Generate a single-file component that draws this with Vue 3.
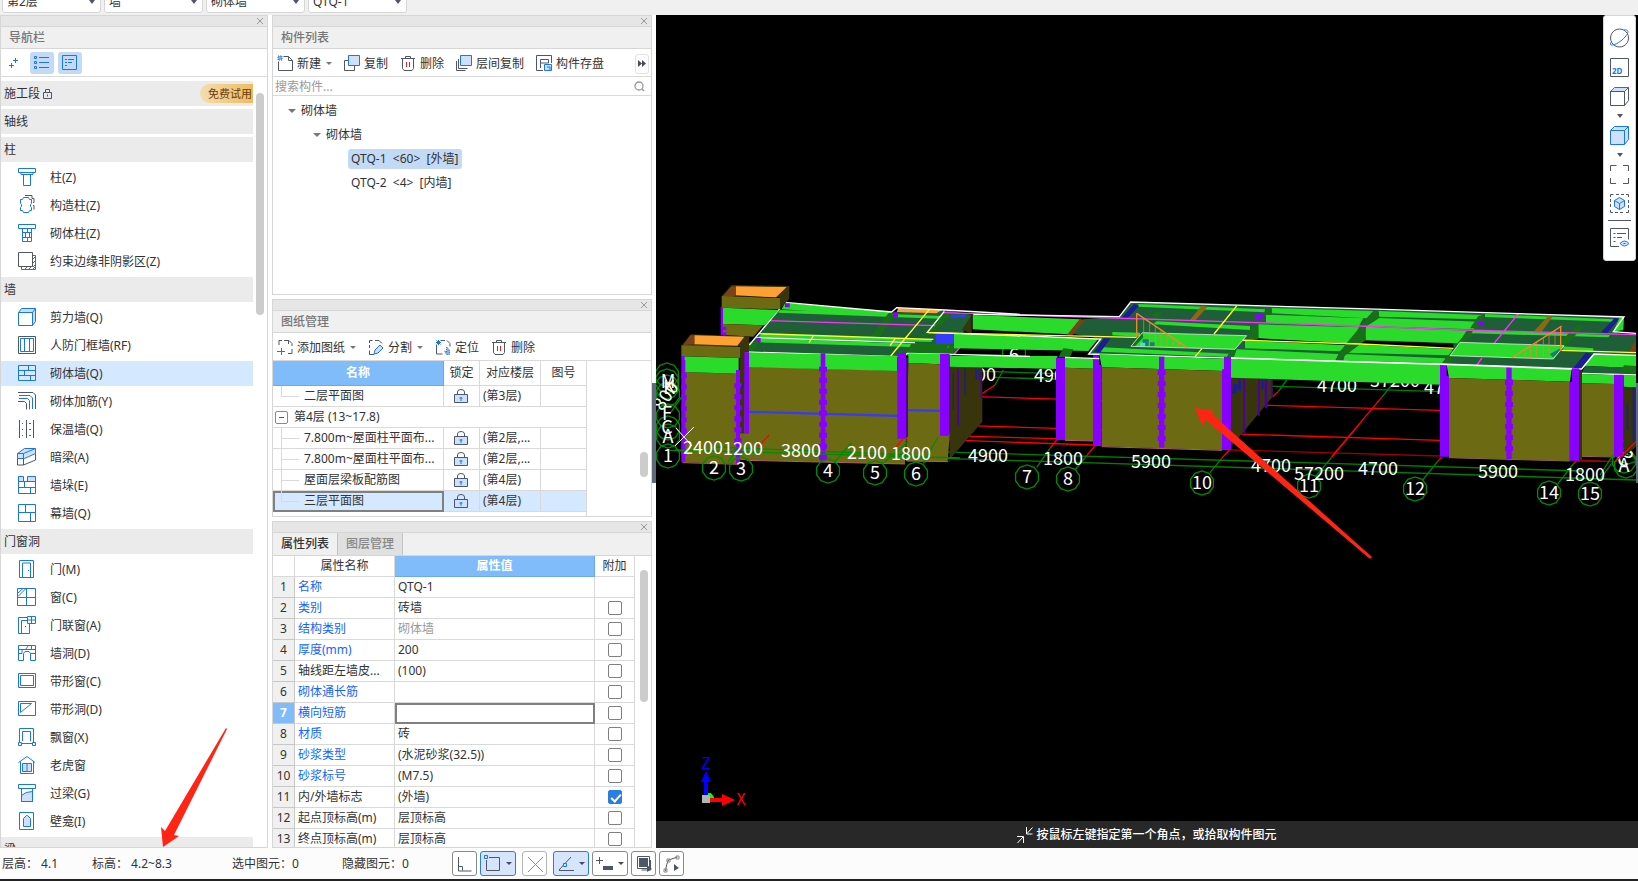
<script setup>
import { ref } from 'vue'

// each icon is a list of [path, kind]: b = blue line, g = grey line, f = blue line with light fill
const navGroups = [
    { name: '施工段', locked: true, badge: '免费试用', items: [] },
    { name: '轴线', items: [] },
    {
        name: '柱',
        items: [
            { name: '柱(Z)', icon: [['M1.5 1.5h17v4h-17zM4 5.5v2h12v-2M6.5 7.5v11h7v-11', 'b']] },
            {
                name: '构造柱(Z)',
                icon: [
                    ['M8 .5h7v3h2v4h-1M16 10.5h1v4', 'g'],
                    ['M6.5 2.5h5l1 2h2v4l-1 1v2l1 1v3h-2l-1 2h-5l-1-2h-2v-3l1-1v-2l-1-1v-4h2z', 'b'],
                ],
            },
            {
                name: '砌体柱(Z)',
                icon: [['M1.5 1.5h17v4h-17zM5.5 5.5v13h9v-13M5.5 9.5h9M5.5 14.5h9M10.5 5.5v4M8.5 9.5v5M12.5 9.5v5M10.5 14.5v4', 'b']],
            },
            {
                name: '约束边缘非阴影区(Z)',
                icon: [
                    ['M1.5 1.5h14v14h-14z', 'g'],
                    ['M16 4.5h2.5v14h-14V16M16 8l2-2M16 12l2-2M16 16l2-2M8 18l2-2M12 18l2-2M16 18l2-2', 'b'],
                ],
            },
        ],
    },
    {
        name: '墙',
        items: [
            { name: '剪力墙(Q)', icon: [['M1.5 5.5l3-4h14v13l-3 4v-13z', 'f'], ['M1.5 5.5h14v13h-14zM15.5 5.5l3-4', 'w']] },
            { name: '人防门框墙(RF)', icon: [['M1.5 1.5h17v17h-17z', 'g'], ['M3.5 3.5h13v13h-13zM7.5 3.5v13M12.5 3.5v13', 'b']] },
            { name: '砌体墙(Q)', active: true, icon: [['M1.5 2.5h17v15h-17zM1.5 7.5h17M1.5 12.5h17M11.5 2.5v5M7.5 7.5v5M13.5 12.5v5', 'b']] },
            {
                name: '砌体加筋(Y)',
                icon: [
                    ['M1 1.5h15l2.500 2.500v14M1 10.500h6.500l2 2v6', 'g'],
                    ['M2 4.500h11l2.500 2.500v11M2 7.500h8.500l2 2v9', 'b'],
                ],
            },
            { name: '保温墙(Q)', icon: [['M2.500 1v18M9.500 1v18M16.500 1v18', 'g'], ['M5 4.500h1M12 4.500h2M5 10.500h1M12 10.500h2M5 16.500h1M12 16.500h2', 'b']] },
            { name: '暗梁(A)', icon: [['M.5 6.500l7-5h11v5l-11 5h-7z', 'f'], ['M.5 11.500v6.500h6v-6.500', 'g'], ['M6.500 18l12-5V6.500', 'g'], ['M.5 6.500h6v5M6.500 6.500l12-5', 'b']] },
            { name: '墙垛(E)', icon: [['M1.5 1.5h5v5h-5zM10.500 1.5h8v5h-8z', 'f'], ['M1.5 1.5v17h17v-17M1.5 6.500h17M1.5 12.500h17M7.500 6.500v6M13.500 12.500v6', 'b']] },
            { name: '幕墙(Q)', icon: [['M1.5 1.5h17v17h-17zM1.5 9.500h17M8.500 1.5v8M13.500 9.500v9', 'b']] },
        ],
    },
    {
        name: '门窗洞',
        items: [
            { name: '门(M)', icon: [['M2.500 18.500v-17h14v17zM5.500 18v-14h8v14M11.500 11v1', 'b']] },
            { name: '窗(C)', icon: [['M.5 1.5h18v17h-18zM.5 10.500h18M9.500 1.5v17M1 6l5-4.500M1 9.500l8-8', 'b']] },
            { name: '门联窗(A)', icon: [['M1.5 18.500v-16h9M12.500 9v9.500h-11M4.500 18V5.500h6M10.500 1.5h8v7h-8zM14.500 1.5v7M10.500 5h8M8.500 11v1', 'b']] },
            { name: '墙洞(D)', icon: [['M1.5 2.500h17v15h-5v-7l-1.500-2h-4l-1.500 2v7h-5zM1.5 6.500h17M8.500 6.500l3-4M5 6.500v4H1.500M13.500 10.500h5M14.500 2.500v4', 'b']] },
            { name: '带形窗(C)', icon: [['M1.5 2.500h17v14h-17zM3.500 4.500h13v10h-13z', 'b']] },
            { name: '带形洞(D)', icon: [['M1.5 2.500h17v14h-17zM3.500 13.500v-9h11z', 'b']] },
            { name: '飘窗(X)', icon: [['M2.500 15V1.5h14V15M5.500 14V4.500h8V14M1.5 15.500h3v3h-3zM15.500 15.500h3v3h-3zM4.500 16.500h11', 'b']] },
            { name: '老虎窗', icon: [['M5.500 8.500h9v8h-9z', 'f'], ['M1.5 7.500l8.500-6 8 6M3.500 6.500v12h13v-12M10 8.500v8', 'b']] },
            { name: '过梁(G)', icon: [['M4.500 18.500v-6q4-4 11-4v10z', 'f'], ['M1.5 1.5h17v4h-17zM4.500 5.500v13h11v-13', 'b']] },
            { name: '壁龛(I)', icon: [['M6.500 15.500v-8l3-3h1l3 3v8z', 'f'], ['M2.500 1.5h14v17h-14z', 'b']] },
        ],
    },
    { name: '梁', items: [] },
]

const selects = ['第2层', '墙', '砌体墙', 'QTQ-1']
const keyword = ref('')

const componentTools = [
    { name: '新建', arrow: true, icon: [['M1 1h4v4H1z', 'd'], ['M6.500 1.5h5l4 4v10h-14v-9M11.500 1.5v4h4', 'g']] },
    { name: '复制', icon: [['M.5 5.500h10v10h-10z', 'g'], ['M4.500 .5h11v10h-11z', 'f']] },
    { name: '删除', icon: [['M1 3.500h14M5.500 3V1.5h5V3M2.500 3.500v10l1.500 2h8l1.500-2v-10', 'g'], ['M6.500 7v5M9.500 7v5', 'r']] },
    { name: '层间复制', icon: [['M.5 6v9.500h9M2.500 4v9.500h9', 'g'], ['M4.500 .5h11v10h-11z', 'f']] },
    { name: '构件存盘', icon: [['M7 15.500H.5v-15h15V8M4.500 13V4.500h8V8h-8', 'g'], ['M8.500 9.500h7v6h-7zM11 12h3v3', 'f']] },
]
const drawingTools = [
    { name: '添加图纸', arrow: true, icon: [['M2 6V1.5h3M7 1.5h5l3 3V7M15 10v4.500h-4M11.500 1.5V5', 'g'], ['M0 12.500h8M4.500 9v7', 'b']] },
    { name: '分割', arrow: true, icon: [['M6 15.500H1.500v-4M1.500 9V6M1.500 4V1.5h3M7 1.5h4l3 3', 'g'], ['M7 11l5-5 3 3-5 5-4 1z', 'f']] },
    { name: '定位', icon: [['M6 1.5h4M12 1.5l3 3v3M1.500 6v9h6', 'g'], ['M3.500 1v5M1 3.500h5M1.500 1.5l4 4M5.500 1.5l-4 4', 'b'], ['M11.500 8v5l-2-1 2 3.500h3V11z', 'd']] },
    { name: '删除', icon: componentTools[2].icon },
]

const drawings = [
    { name: '二层平面图', floor: '(第3层)', last: true },
    { name: '第4层 (13~17.8)', group: true },
    { name: '7.800m~屋面柱平面布...', floor: '(第2层,...' },
    { name: '7.800m~屋面柱平面布...', floor: '(第2层,...' },
    { name: '屋面层梁板配筋图', floor: '(第4层)' },
    { name: '三层平面图', floor: '(第4层)', last: true, selected: true },
    { name: '', group: true },
]

const properties = ref([
    { name: '名称', value: 'QTQ-1', blue: true, noCheck: true },
    { name: '类别', value: '砖墙', blue: true },
    { name: '结构类别', value: '砌体墙', blue: true, muted: true },
    { name: '厚度(mm)', value: '200', blue: true },
    { name: '轴线距左墙皮...', value: '(100)' },
    { name: '砌体通长筋', value: '', blue: true },
    { name: '横向短筋', value: '', blue: true, current: true },
    { name: '材质', value: '砖', blue: true },
    { name: '砂浆类型', value: '(水泥砂浆(32.5))', blue: true },
    { name: '砂浆标号', value: '(M7.5)', blue: true },
    { name: '内/外墙标志', value: '(外墙)', checked: true },
    { name: '起点顶标高(m)', value: '层顶标高' },
    { name: '终点顶标高(m)', value: '层顶标高' },
])

const statusTools = [
    { name: '正交', icon: [['M2.500 3v14h13M2.500 12.500h4v4', 'g']] },
    { name: '矩形捕捉', on: true, arrow: true, icon: [['M5 3.500h10.500v13H2.500V6', 'g'], ['M.5 1.500h3v3h-3z', 'f']] },
    { name: '交点', dim: true, icon: [['M2 3l15 15M17 3L2 18', 'h']] },
    { name: '角度', on: true, arrow: true, icon: [['M2 16L14 3M2 16.500h15', 'g'], ['M6.500 9.500h3v3h-3z', 'f']] },
    { name: '动态输入', arrow: true, icon: [['M0 6.500h7M3.500 3v7', 'g'], ['M7 12h10v4H7z', 'k']] },
    { name: '选择', icon: [['M4 4h9v9H4z', 'k'], ['M2.500 2.500h12v12h-12zM15.500 6v10h-9', 'g'], ['M12 11v7l5-3z', 'k']] },
    { name: '折线', icon: [['M2.500 17q1-8 3-11l9-3', 'g'], ['M1 15h3v3H1zM4 5h3v3H4zM13 2h3v3h-3z', 'h'], ['M11 10v7l5-3z', 'k']] },
]

const viewTools = [
    { name: '动态观察', icon: [['M10.500 1a9 9 0 1 0 .1 0', 'g'], ['M3 13C-2 19 6 18 13 12S21 1 15 2', 'b']] },
    { name: '二维', text: '2D', icon: [['M1.500 1.500h18v18h-18z', 'g']] },
    { name: '视图', arrow: true, icon: [['M1.500 5.500l4-4h14l-4 4z', 'f'], ['M1.500 5.500h14v14h-14zM19.500 1.500v13l-4 5', 'g']] },
    { name: '显示', arrow: true, icon: [['M1.500 5.500l4-4h14v13l-4 5h-14z', 'f'], ['M1.500 5.500h14v14M15.500 5.500l4-4', 'b']] },
    { name: '全屏', icon: [['M1.500 7V1.500h6M14 1.500h5.500V7M19.500 14v5.500H14M7 19.500H1.500V14', 'g']] },
    { name: '局部三维', divider: true, icon: [['M1.500 4V1.500h3M7 1.500h3M12 1.500h3M17 1.500h2.500V4M19.500 7v3M19.500 12v3M19.500 17v2.500H17M14 19.500h-3M9 19.500H6M4 19.500H1.500V17M1.500 14v-3M1.500 9V6', 'g'], ['M10.500 4.500l5 3v6l-5 3-5-3v-6z', 'f'], ['M5.500 7.500l5 3 5-3M10.500 10.500v6', 'b']] },
    { name: '显示设置', icon: [['M10 19.500H1.500v-18h18v11M4.500 6.500h2M8 6.500h9M4.500 10.500h2M8 10.500h5M4.500 14.500h2', 'g'], ['M11 16.500q4.500-5 9 0q-4.500 5-9 0zM14.500 16.500h2', 'f']] },
]

// axis bubbles and dimensions of the grid
const bubbles = [
    [668, 456, '1'], [714, 468, '2'], [741, 469, '3'], [828, 471, '4'], [875, 473, '5'], [916, 474, '6'],
    [1027, 477, '7'], [1068, 479, '8'], [1202, 483, '10'], [1309, 486, '11'], [1415, 489, '12'], [1549, 493, '14'], [1590, 494, '15'],
]
const sideBubbles = [
    [667, 375], [667, 381], [667, 387], [668, 394], [668, 416], [668, 428], [668, 436],
    [1624, 461], [1626, 466], [1628, 452],
]
const dims = [
    [703, 448, '2400'], [743, 449, '1200'], [801, 451, '3800'], [867, 453, '2100'], [911, 454, '1800'], [988, 456, '4900'],
    [1063, 459, '1800'], [1151, 462, '5900'], [1271, 466, '4700'], [1319, 474, '57200'], [1378, 469, '4700'], [1498, 472, '5900'], [1585, 475, '1800'],
]
const hiddenDims = [[976, 375, '1800'], [1054, 376, '4900'], [1337, 386, '4700'], [1395, 381, '57200'], [1444, 388, '4700']]

const bubblePoints = (x, y) => {
    const points = []
    for (let i = 0; i < 10; i++) {
        const angle = (i * Math.PI) / 5 + Math.PI / 10
        points.push(`${(x + 12 * Math.cos(angle)).toFixed(1)},${(y + 12 * Math.sin(angle)).toFixed(1)}`)
    }
    return points.join(' ')
}

// toothed column: the masonry teeth stick out on both sides
const toothed = (x, top, bottom, narrow, wide) => {
    let path = `M${x - narrow} ${top}H${x + narrow}V${bottom}H${x - narrow}z`
    for (let y = top + 40; y < bottom - 12; y += 33) {
        path += `M${x - wide} ${y}H${x + wide}v15H${x - wide}z`
    }
    return path
}
</script>

<template>
    <div class="app">
        <header class="topbar">
            <div v-for="s in selects" :key="s" class="select-box">
                <select :aria-label="s">
                    <option>{{ s }}</option>
                </select>
            </div>
        </header>

        <main class="main">
            <!-- navigation -->
            <aside class="panel nav">
                <div class="strip">
                    <button class="close" aria-label="关闭"><svg width="8" height="8"><path d="M1 1l6 6M7 1L1 7" /></svg></button>
                </div>
                <h2 class="panel-title">导航栏</h2>
                <div class="toolbar nav-toolbar">
                    <button class="mini" aria-label="添加">
                        <svg width="22" height="22"><path class="b" d="M4 13.500h5M6.500 11v5M8 8.500h5M10.500 6v5" /></svg>
                    </button>
                    <button class="mini on" aria-label="列表">
                        <svg width="24" height="22">
                            <path class="b" d="M4.500 4.500h2v2h-2zM4.500 9.500h2v2h-2zM4.500 14.500h2v2h-2zM9 5.500h10M9 10.500h10M9 15.500h10" />
                        </svg>
                    </button>
                    <button class="mini on" aria-label="分组">
                        <svg width="24" height="22">
                            <path class="b" d="M4.500 3.500h14v14h-14zM7 7.500h2M10 7.500h6M7 10.500h2M10 10.500h4M7 13.500h2" />
                        </svg>
                    </button>
                </div>
                <div class="nav-body">
                    <div class="nav-list">
                        <template v-for="group in navGroups" :key="group.name">
                            <div class="nav-head">
                                <span>{{ group.name }}</span>
                                <svg v-if="group.locked" class="small-lock" width="11" height="12">
                                    <path class="g" d="M1.500 4.500h8v6h-8zM3.500 4V1.500h4V4M5.500 6.500v2" />
                                </svg>
                                <span v-if="group.badge" class="badge">{{ group.badge }}</span>
                            </div>
                            <div v-for="item in group.items" :key="item.name" class="nav-item" :class="{ active: item.active }">
                                <svg width="21" height="21">
                                    <path v-for="(p, i) in item.icon" :key="i" :d="p[0]" :class="p[1]" />
                                </svg>
                                <span>{{ item.name }}</span>
                            </div>
                        </template>
                    </div>
                    <div class="thumb nav-thumb"></div>
                </div>
                <svg class="nav-arrow" width="66" height="120" viewBox="161 729 66 120">
                    <path d="M163 849L161 829L165 833L226 730L227 731L174 837L179 838z" />
                </svg>
            </aside>

            <div class="middle">
                <!-- component list -->
                <section class="panel components">
                    <div class="strip">
                        <button class="close" aria-label="关闭"><svg width="8" height="8"><path d="M1 1l6 6M7 1L1 7" /></svg></button>
                    </div>
                    <h2 class="panel-title">构件列表</h2>
                    <div class="toolbar">
                        <button v-for="tool in componentTools" :key="tool.name" class="tool">
                            <svg width="16" height="17">
                                <path v-for="(p, i) in tool.icon" :key="i" :d="p[0]" :class="p[1]" />
                            </svg>
                            <span>{{ tool.name }}</span>
                            <i v-if="tool.arrow" class="caret"></i>
                        </button>
                        <button class="more" aria-label="更多">
                            <svg width="8" height="7"><path d="M0 0l4 3.500-4 3.500zM4 0l4 3.500-4 3.500z" fill="#444b59" /></svg>
                        </button>
                    </div>
                    <div class="search">
                        <input v-model="keyword" type="text" placeholder="搜索构件..." aria-label="搜索构件" />
                        <svg width="12" height="12">
                            <circle cx="6" cy="5" r="4" fill="none" stroke="#999" stroke-width="1.300" />
                            <path d="M9 8l2 2" stroke="#999" stroke-width="1.500" />
                        </svg>
                    </div>
                    <ul class="tree">
                        <li class="level1"><i class="caret big"></i>砌体墙</li>
                        <li class="level2"><i class="caret big"></i>砌体墙</li>
                        <li class="level3"><span class="picked">QTQ-1&nbsp; &lt;60&gt;&nbsp; [外墙]</span></li>
                        <li class="level3"><span>QTQ-2&nbsp; &lt;4&gt;&nbsp; [内墙]</span></li>
                    </ul>
                </section>

                <!-- drawings -->
                <section class="panel drawings">
                    <div class="strip">
                        <button class="close" aria-label="关闭"><svg width="8" height="8"><path d="M1 1l6 6M7 1L1 7" /></svg></button>
                    </div>
                    <h2 class="panel-title">图纸管理</h2>
                    <div class="toolbar">
                        <button v-for="tool in drawingTools" :key="tool.name" class="tool">
                            <svg width="16" height="17">
                                <path v-for="(p, i) in tool.icon" :key="i" :d="p[0]" :class="p[1]" />
                            </svg>
                            <span>{{ tool.name }}</span>
                            <i v-if="tool.arrow" class="caret"></i>
                        </button>
                    </div>
                    <div class="table-area">
                        <table class="drawing-table">
                            <colgroup>
                                <col class="c-name" />
                                <col class="c-lock" />
                                <col class="c-floor" />
                                <col class="c-no" />
                            </colgroup>
                            <thead>
                                <tr>
                                    <th class="hot">名称</th>
                                    <th>锁定</th>
                                    <th>对应楼层</th>
                                    <th>图号</th>
                                </tr>
                            </thead>
                            <tbody>
                                <tr v-for="(row, i) in drawings" :key="i" :class="{ selected: row.selected }">
                                    <td v-if="row.group" colspan="4" class="group-cell">
                                        <div><i class="minus"></i>{{ row.name }}</div>
                                    </td>
                                    <template v-else>
                                        <td class="leaf" :class="{ last: row.last, focus: row.selected }">{{ row.name }}</td>
                                        <td class="lock-cell">
                                            <svg width="14" height="16">
                                                <path class="lock" d="M.5 6.500h13v8H.5z" />
                                                <path class="g" d="M3.500 6V4q0-2.500 3.500-2.500T10.500 4v2" />
                                                <path class="b" d="M5.500 10h3M7 9v4" />
                                            </svg>
                                        </td>
                                        <td>{{ row.floor }}</td>
                                        <td></td>
                                    </template>
                                </tr>
                            </tbody>
                        </table>
                        <div class="thumb drawing-thumb"></div>
                    </div>
                </section>

                <!-- properties -->
                <section class="panel properties">
                    <div class="strip">
                        <button class="close" aria-label="关闭"><svg width="8" height="8"><path d="M1 1l6 6M7 1L1 7" /></svg></button>
                    </div>
                    <div class="tabs">
                        <button class="tab current">属性列表</button>
                        <button class="tab">图层管理</button>
                    </div>
                    <div class="table-area">
                        <table class="prop-table">
                            <colgroup>
                                <col class="p-num" />
                                <col class="p-name" />
                                <col class="p-value" />
                                <col class="p-extra" />
                            </colgroup>
                            <thead>
                                <tr>
                                    <th></th>
                                    <th>属性名称</th>
                                    <th class="hot">属性值</th>
                                    <th>附加</th>
                                </tr>
                            </thead>
                            <tbody>
                                <tr v-for="(row, i) in properties" :key="row.name">
                                    <td class="num" :class="{ hot: row.current }">{{ i + 1 }}</td>
                                    <td :class="{ blue: row.blue }">{{ row.name }}</td>
                                    <td :class="{ muted: row.muted, focus: row.current }">{{ row.value }}</td>
                                    <td class="check">
                                        <input v-if="!row.noCheck" v-model="row.checked" type="checkbox" :aria-label="row.name" />
                                    </td>
                                </tr>
                            </tbody>
                        </table>
                        <div class="thumb prop-thumb"></div>
                    </div>
                </section>
            </div>

            <!-- 3D view -->
            <section class="viewport">
                <div class="canvas">
                    <svg class="scene" viewBox="656 15 982 807" preserveAspectRatio="xMinYMin slice">
                        <!-- axis grid -->
                        <g transform="translate(650 270) scale(0.33333)">
                            <path class="axis-red" d="M980 380L2370 421M925 466L2370 511M890 497L1218 506M765 505L1330 525M2785 572L2890 575" />
                            <path class="axis-dark" d="M1740 540L2370 558M2780 572L2900 575" />
                            <path class="axis-green" d="M980 303L1218 311M1035 322L2370 365M350 530L2800 603M60 541L1110 572L2040 601L2958 630" />
                            <path class="axis-red" d="M760 508L740 530M893 497L868 527M1035 345L995 372M1220 510L1200 535M1335 528L1310 557M1738 540L1715 565M2130 460L2045 562M2195 382L2045 560M1885 365L1868 380M2375 562L2365 572M2780 572L2770 582" />
                            <path class="axis-green" d="M740 530L695 580M868 527L820 580M1060 300L1035 345M1200 535L1160 592M1310 557L1275 600M1715 565L1680 608M2045 562L1998 618M2225 345L2195 382M1910 330L1885 365M2365 572L2318 630M2770 582L2722 643M2885 580L2845 635M110 360L60 430" />
                        </g>
                        <polygon v-for="(b, i) in sideBubbles" :key="'s' + i" :points="bubblePoints(b[0], b[1])" class="bubble" />
                        <polygon :points="bubblePoints(1014, 354)" class="bubble" />
                        <text x="1014" y="361" class="label">6</text>
                        <text v-for="(d, i) in hiddenDims" :key="'h' + i" :x="d[0]" :y="d[1] + 6" class="label">{{ d[2] }}</text>
                        <g class="side-text">
                            <text x="668" y="388" class="label">M</text>
                            <text x="669" y="394" class="label">K</text>
                            <text x="666" y="402" class="label" transform="rotate(-55 666 396)">800</text>
                            <text x="667" y="420" class="label">F</text>
                            <text x="667" y="434" class="label">C</text>
                            <text x="668" y="443" class="label">A</text>
                            <text x="1628" y="458" class="label">S</text>
                            <text x="1623" y="466" class="label">C</text>
                            <text x="1624" y="472" class="label">A</text>
                        </g>

                        <!-- west wing -->
                        <g transform="translate(650 270) scale(0.33333)">
                            <path class="teal" d="M385 118L720 128L885 120L965 135L905 260L285 246z" />
                            <path class="green" d="M405 98L725 126L705 138L395 118zM390 120L880 138L870 146L385 128zM335 192L845 208V216L325 202zM325 205L895 225L900 235L330 217z" />
                            <path class="mid" d="M715 130L735 135L690 200H662zM880 130L905 136L840 195L810 200zM300 215L325 218L310 246H285zM785 218L900 222L880 250H770zM900 225L932 232L910 255L880 250z" />
                            <path class="orange" d="M745 114L875 120L860 130L740 126z" />
                            <path class="olive-dark" d="M935 180L965 136V190zM899 280L925 285L997 260V455L893 575H899z" />
                            <path class="magenta" d="M355 152L855 167M882 128L1110 136M935 227L913 252" />
                            <path class="yellow" d="M325 191L850 208M838 118L722 258M490 198L477 218M720 228L735 206" />
                            <path class="green" d="M968 135L1290 148L1255 193L968 178zM912 190L1345 206L1315 243L912 235zM899 258H1222V297L899 290z" />
                            <path class="blue" d="M905 134H955L940 143H900zM857 188H911V222H857z" />
                            <path class="white" d="M405 97L725 126L740 113L885 120L1110 133M390 115L298 225M320 203L795 218M285 246L760 260L772 250L1140 259M883 124L832 187L1110 198" />
                            <path class="purple" d="M405 100h14v12h-14zM730 127h14v14h-14zM320 204h12v12h-12z" />

                            <path class="olive-dark" d="M245 45L418 48V86L390 118V82L215 78z" />
                            <path class="orange" d="M257 49L410 51L378 82L257 76z" />
                            <path class="brown" d="M257 49V76L250 80H218L243 50z" />
                            <path class="olive" d="M215 78L390 84V118L215 113z" />
                            <path class="green" d="M218 113L387 120L345 166L218 162z" />
                            <path class="olive" d="M218 162L340 166L310 200L218 195z" />
                            <path class="purple" d="M212 112h7v83h-7zM219 170h10v10h-10zM219 187h10v10h-10z" />

                            <path class="olive-dark" d="M122 193L297 199V247L270 265V228H94z" />
                            <path class="orange" d="M133 196L283 200L262 227L133 223z" />
                            <path class="brown" d="M133 196V223L100 225L121 196z" />
                            <path class="olive" d="M94 226L270 230V264L94 258zM98 306L266 311L270 582L98 577z" />
                            <path class="green" d="M98 259L266 264V311L98 306z" />
                            <path class="olive-dark" d="M270 264L285 250V490H270z" />
                            <path class="olive" d="M270 490H283L285 290L745 302L768 505L765 582L270 570z" />
                            <path class="green" d="M285 247L742 258V303L285 291zM775 250L870 252V283L775 279z" />
                            <path class="olive" d="M775 279L870 283L899 497L893 575L768 573z" />
                            <path class="blue" d="M297 422L745 434V441L297 429zM775 417L870 419V426L775 424z" />
                            <path class="purple" d="M94 258h10V577H94zM283 247h14V491H283zM742 250h26V506H742zM870 252h29V497H870z" />
                            <path class="purple" :d="toothed(264, 300, 582, 6, 11)" />
                            <path class="purple" :d="toothed(102, 270, 577, 4, 8)" />
                            <path class="purple" :d="toothed(519, 250, 574, 7, 12)" />
                            <path class="purple-dark" d="M768 262h6V500h-6zM922 296h5V466h-5zM991 296h5V383h-5z" />
                            <path class="navy" d="M943 296h5v79h-5zM977 296h4v34h-4zM986 296h4v34h-4zM908 310h4v110h-4zM272 350l10-8v6l-10 8z" />
                            <path class="pink" d="M98 578L266 583M290 571L765 582M770 573L893 575" />
                        </g>

                        <!-- middle and east roof -->
                        <g transform="translate(1020 280) scale(0.33333)">
                            <path class="teal" d="M332 66L1020 86L1812 111L1790 160L1848 165V225L1680 265L205 222L240 176L150 160L190 118L298 110z" />
                            <path class="black" d="M700 172L1300 190V212L990 200L700 180z" />
                            <path class="green" d="M355 72L735 88V97L355 80zM755 84L1060 93L1040 115L755 100zM738 104L1030 115L1015 141L738 128zM715 133L1018 142L985 190L715 175zM675 183L978 195L960 214L675 205zM650 208L955 222L945 245L640 232z" />
                            <path class="green" d="M410 124L690 138V150L400 133zM277 156L360 158V170L277 166zM250 202L640 222V232L240 215z" />
                            <path class="green" d="M1075 93L1385 105L1375 118L1075 110zM1055 113L1380 125L1360 148L1040 138zM1038 140L1340 152L1315 190L1035 180zM990 193L1300 208L1285 226L980 218zM975 222L1275 235V250L970 242z" />
                            <path class="mid" d="M1060 92L1077 95V115L1035 142L1038 180L950 245L945 242L975 195L1020 142zM690 145L715 133V178L685 182zM735 90L755 84V105H730zM645 186L675 183L650 208L640 236L620 232z" />
                            <path class="mid" d="M1345 152L1360 148V165L1320 190H1312zM1375 108L1392 105L1375 145H1350zM1285 226L1300 230L1290 252L1265 250zM405 97h22l-10 18h-20z" />
                            <path class="green" d="M1395 102L1780 118V125L1395 111zM1360 150L1770 165L1765 172L1355 160z" />
                            <path class="mid" d="M1672 135L1692 137L1640 195H1610z" />
                            <path class="beam" d="M545 77L562 81L525 122H508zM1585 107L1597 111L1565 155L1543 152z" />
                            <path class="brown" d="M180 117L195 120L157 166H140zM1840 190L1848 188V216H1828z" />
                            <path class="navy" d="M343 72L357 78L320 118L303 115zM252 175H272L240 218L222 216zM1785 113L1798 116L1762 160L1743 157zM1697 218L1716 222L1685 265L1660 264z" />
                            <path class="green" d="M1798 115L1812 111L1810 150L1780 155zM1720 223L1848 227V264L1690 258zM1625 199L1720 205V214L1625 209z" />
                            <path class="teal" d="M1695 258L1848 264V284L1685 280z" />
                            <path class="mid" d="M1812 256L1848 258V282L1800 280zM130 205L160 208L150 232H115z" />
                            <path class="purple" d="M708 103h27l-12 14h-15zM645 182h15v22h-15zM1366 124h26v13h-13zM1310 200h17v24h-10v-15h-7z" />
                            <path class="magenta" d="M0 105L1020 138L1330 150L1848 164M1496 100L1422 190M1386 234L1367 260" />
                            <path class="yellow" d="M-275 158L350 172M650 180L1020 192L1300 205M1620 211L1848 218M650 78L582 162M546 206L525 230" />
                            <path class="green" d="M367 158L680 167L645 208L333 199zM1320 187L1632 197L1600 237L1290 227z" />
                            <path class="mid" d="M367 158L333 199H345L370 172z" />
                            <path class="cyan" d="M360 188h16v10h-16z" />
                            <path class="steel" d="M368 178h18v20h-10v-10h-8zM390 187h14v12h-14zM1590 222l40-22v8l-32 24z" />
                            <path class="white" d="M-140 103L298 110L332 66L1020 86L1812 111L1780 155L1848 160M0 167L242 177L206 222L1020 246L1260 252L1685 267L1722 222L1848 226M1685 280L1848 285" />
                            <path class="white thin" d="M367 158L680 167L645 208L333 199zM1320 187L1632 197L1600 237L1290 227z" />
                            <path class="orange-line" d="M350 100V175M350 100L500 202M1622 140V212M1475 234L1625 138" />
                            <path class="orange-line thin" d="M371 115V170M389 128V195M406 140V198M423 150V198M441 163V200M459 175V202M475 187V203M1605 150V205M1587 163V225M1570 175V232M1550 187V235M1532 200V236M1515 210V236" />
                        </g>

                        <!-- middle and east walls -->
                        <g transform="translate(1020 280) scale(0.33333)">
                            <path class="olive-dark" d="M633 290L758 298V350L633 500z" />
                            <path class="purple-dark" d="M670 295h5V460h-5zM714 298h5V408h-5zM734 300h8V385h-8zM752 300h5V355h-5z" />
                            <path class="navy" d="M640 312h14l-6 30h-12zM655 300h8v32h-8zM723 300h8v28h-8z" />
                            <path class="green" d="M633 234L1020 246L1262 254V314L633 293zM135 233L220 236V266L135 263zM238 222L612 237V273L245 262z" />
                            <path class="olive" d="M135 263L220 266V483L135 480zM245 262L606 273V510L245 499z" />
                            <path class="purple" d="M108 233h27V480h-27zM219 226h19v29h7v243h-26zM612 230h21v280h-27V268h6z" />
                            <path class="purple" :d="toothed(425, 230, 503, 8, 12)" />
                            <path class="pink" d="M135 481L219 483M245 500L606 511M1287 533L1650 543M1686 529L1785 531" />
                            <path class="olive-dark" d="M1678 270H1686V540H1678zM1811 320L1848 310V500L1811 530z" />
                            <path class="green" d="M1280 254L1655 267L1650 305L1287 294zM1686 282L1785 285V312L1686 310zM1811 285L1848 287V322L1811 320z" />
                            <path class="olive" d="M1287 294L1650 305V543L1287 533zM1686 310L1785 312V531L1686 528z" />
                            <path class="purple" d="M1260 252h20v35h7v243h-27zM1655 265h23v277h-30V305h7zM1782 284h29V530h-29z" />
                            <path class="purple" :d="toothed(1467, 260, 537, 8, 12)" />
                            <path class="navy" d="M1820 370h5v80h-5zM1838 322h6v165h-6z" />
                            <path class="white" d="M633 234L1020 246L1262 253L1655 267M135 232L238 236" />
                        </g>

                        <!-- bubbles and dimensions in front of the model -->
                        <g v-for="b in bubbles" :key="b[2]">
                            <polygon :points="bubblePoints(b[0], b[1])" class="bubble" />
                            <text :x="b[0]" :y="b[1] + 6" class="label">{{ b[2] }}</text>
                        </g>
                        <path class="front-green" d="M715 447L913 455M675 450L960 458M737 450L728 462M851 443L834 463M908 442L882 464M938 437L924 462M1613 455L1600 475" />
                        <path class="front-red" d="M769 435L758 447M903 439L896 447M1640 438L1615 462" />
                        <text v-for="(d, i) in dims" :key="'d' + i" :x="d[0]" :y="d[1] + 6" class="label">{{ d[2] }}</text>
                        <path class="cursor" d="M675 446L694 427M676 428L692 446" />

                        <!-- axis gizmo -->
                        <path d="M707 803v-10h4l3 4v4z" fill="#0f0" />
                        <path d="M704 797V782h-3l5-11 5 11h-3v15z" fill="#00f" />
                        <path d="M708 798h14v-4l13 6-13 6v-4h-14z" fill="#f00" />
                        <path d="M702 795h8v8h-8z" fill="#b4b4b4" />
                        <text x="706" y="769" class="label z">Z</text>
                        <text x="741" y="805" class="label x">X</text>

                        <path class="red-arrow" d="M1195 408L1214 411L1212 414L1372 557L1370 559L1206 420L1202 425z" />
                    </svg>

                    <div class="view-tools">
                        <template v-for="tool in viewTools" :key="tool.name">
                            <button class="view-btn" :aria-label="tool.name">
                                <svg width="21" height="21">
                                    <path v-for="(p, i) in tool.icon" :key="i" :d="p[0]" :class="p[1]" />
                                    <text v-if="tool.text" x="3" y="17">{{ tool.text }}</text>
                                </svg>
                            </button>
                            <i v-if="tool.arrow" class="caret view-caret"></i>
                            <hr v-if="tool.divider" />
                        </template>
                    </div>
                    <div class="splitter left"></div>
                    <div class="splitter right"></div>
                </div>
                <div class="hint">
                    <svg width="16" height="18"><path d="M9.500 1v7h6M15.500 1.500L10 7.500M0 10.500h6.500V17M6 11L.5 17" stroke="#fff" fill="none" /></svg>
                    <span>按鼠标左键指定第一个角点，或拾取构件图元</span>
                </div>
            </section>
        </main>

        <footer class="status">
            <span class="s1">层高： 4.1</span>
            <span class="s2">标高： 4.2~8.3</span>
            <span class="s3">选中图元：0</span>
            <span class="s4">隐藏图元：0</span>
            <div class="status-tools">
                <button v-for="tool in statusTools" :key="tool.name" :class="{ on: tool.on, dim: tool.dim, wide: tool.arrow }" :aria-label="tool.name">
                    <svg width="18" height="20">
                        <path v-for="(p, i) in tool.icon" :key="i" :d="p[0]" :class="p[1]" />
                    </svg>
                    <i v-if="tool.arrow" class="caret dark"></i>
                </button>
            </div>
        </footer>
    </div>
</template>

<style>
html,
body {
    margin: 0;
    background: #fff;
}
</style>

<style scoped>
* {
    box-sizing: border-box;
}
.app {
    height: 100vh;
    display: flex;
    flex-direction: column;
    overflow: hidden;
    font-family: 'Noto Sans', 'Noto Sans CJK SC', sans-serif;
    font-size: 12px;
    line-height: 20px;
    color: #333;
    background: #fff;
}
button,
input,
select {
    font: inherit;
    color: inherit;
    padding: 0;
    margin: 0;
    border: 0;
    background: none;
}
svg {
    display: block;
    flex: none;
}

/* icon strokes */
.b,
.g,
.f,
.w,
.r,
.h {
    fill: none;
    stroke: #1b76e5;
}
.g {
    stroke: #4f5668;
}
.h {
    stroke: #888;
}
.f {
    fill: #cfe1fa;
}
.w {
    fill: #fff;
}
.r {
    stroke: #e02020;
}
.d {
    fill: #7fb0ee;
    stroke: #1b76e5;
    stroke-dasharray: 1 1;
}
.k {
    fill: #4f5668;
}
.lock {
    fill: #cfe1fa;
    stroke: #4f5668;
}

.topbar {
    flex: none;
    height: 15px;
    padding-left: 2px;
    display: flex;
    gap: 3px;
    overflow: hidden;
    background: #f0f0f0;
}
.select-box {
    position: relative;
    width: 99px;
    height: 22px;
    margin-top: -9px;
}
.select-box::after {
    content: '';
    position: absolute;
    right: 6px;
    top: 9px;
    border: 3px solid transparent;
    border-top: 4px solid #4f5668;
}
.select-box select {
    width: 100%;
    height: 22px;
    padding-left: 4px;
    appearance: none;
    background: #fff;
    border: 1px solid #d6d6d6;
    border-radius: 3px;
}

.main {
    flex: 1;
    min-height: 0;
    display: flex;
}
.panel {
    border: 1px solid #d6d6d6;
    background: #fff;
    display: flex;
    flex-direction: column;
    overflow: hidden;
}
.strip {
    flex: none;
    height: 11px;
    display: flex;
    justify-content: flex-end;
    background: #e6e6e6;
    border-bottom: 1px solid #d6d6d6;
}
.close {
    width: 14px;
    height: 10px;
    display: flex;
    align-items: center;
    justify-content: center;
}
.close path {
    stroke: #999;
}
.panel-title {
    flex: none;
    margin: 0;
    height: 22px;
    padding-left: 8px;
    font-size: 12px;
    font-weight: 500;
    line-height: 21px;
    color: #777;
    background: #f0f0f0;
    border-bottom: 1px solid #d6d6d6;
}
.toolbar {
    flex: none;
    height: 28px;
    padding: 2px 2px 0 4px;
    display: flex;
    align-items: center;
    gap: 12px;
    border-bottom: 1px solid #d9d9d9;
}
.tool {
    display: flex;
    align-items: center;
    gap: 4px;
    white-space: nowrap;
}
.tool .caret {
    margin-left: 1px;
}
.caret {
    flex: none;
    border: 3px solid transparent;
    border-top: 3px solid #777;
    border-bottom: 0;
}
.caret.big {
    border-width: 4px 4px 0;
}
.caret.dark {
    border-top-color: #444b59;
}
.more {
    width: 14px;
    height: 20px;
    margin-left: auto;
    display: flex;
    align-items: center;
    justify-content: center;
    border: 1px solid #e2e2e2;
    border-radius: 3px;
}
.thumb {
    flex: none;
    width: 8px;
    border-radius: 4px;
    background: #ccc;
}

/* navigation */
.nav {
    position: relative;
    flex: none;
    width: 268px;
}
.nav-toolbar {
    gap: 4px;
    padding-top: 0;
}
.mini {
    width: 24px;
    height: 22px;
    border-radius: 3px;
}
.mini:first-child {
    width: 21px;
}
.mini.on {
    background: #c2daf5;
}
.nav-body {
    flex: 1;
    min-height: 0;
    display: flex;
    gap: 3px;
    padding-top: 4px;
}
.nav-list {
    width: 252px;
    overflow: hidden;
}
.nav-head,
.nav-item {
    height: 25px;
    margin-bottom: 3px;
    display: flex;
    align-items: center;
}
.nav-head {
    padding-left: 3px;
    background: #ebebeb;
}
.small-lock {
    margin-left: 2px;
}
.badge {
    width: 53px;
    height: 19px;
    margin-left: auto;
    padding-left: 8px;
    font-size: 11px;
    line-height: 19px;
    color: #6b3a0a;
    border-radius: 10px 0 0 10px;
    background: linear-gradient(90deg, #f6dcae, #ecbc60);
}
.nav-item {
    padding-left: 16px;
    gap: 12px;
}
.nav-item.active {
    background: #d4e8ff;
}
.nav-thumb {
    height: 222px;
    margin-top: 12px;
}
.nav-arrow {
    position: absolute;
    left: 160px;
    bottom: 0;
    fill: #ff2414;
}

/* middle column */
.middle {
    flex: none;
    width: 380px;
    margin: 0 4px;
    display: flex;
    flex-direction: column;
    gap: 4px;
}
.components {
    flex: none;
    height: 280px;
}
.drawings {
    flex: none;
    height: 218px;
}
.properties {
    flex: 1;
    min-height: 0;
}
.search {
    flex: none;
    height: 19px;
    padding: 1px 6px 0 2px;
    display: flex;
    align-items: center;
    border-bottom: 1px solid #d9d9d9;
}
.search input {
    flex: 1;
    min-width: 0;
    height: 17px;
    outline: none;
}
.search input::placeholder {
    color: #999;
}
.tree {
    margin: 0;
    padding: 3px 0 0;
    list-style: none;
}
.tree li {
    height: 24px;
    display: flex;
    align-items: center;
    gap: 5px;
}
.level1 {
    padding-left: 15px;
}
.level2 {
    padding-left: 40px;
}
.level3 {
    padding-left: 75px;
}
.level3 span {
    padding: 0 4px 0 3px;
    border-radius: 3px;
}
.level3 .picked {
    background: #c2daf5;
}

/* tables */
.table-area {
    flex: 1;
    min-height: 0;
    display: flex;
    justify-content: space-between;
    align-items: flex-start;
    padding-right: 3px;
    overflow: hidden;
}
table {
    table-layout: fixed;
    border-collapse: separate;
    border-spacing: 0;
}
th,
td {
    height: 21px;
    padding: 0 0 0 3px;
    line-height: 18px;
    white-space: nowrap;
    overflow: hidden;
    border-right: 1px solid #d9d9d9;
    border-bottom: 1px solid #d9d9d9;
}
th {
    padding: 0;
    font-weight: 400;
    text-align: center;
}
.hot {
    color: #fff;
    font-weight: 700;
    background: #80bbfa;
    border-color: #6aa9ea;
}
.focus {
    outline: 2px solid #808080;
    outline-offset: -2px;
}
.drawing-table {
    width: 314px;
}
.drawing-table th {
    height: 25px;
}
.c-name {
    width: 171px;
}
.c-lock {
    width: 36px;
}
.c-floor {
    width: 61px;
}
.c-no {
    width: 46px;
}
.drawing-table .leaf {
    position: relative;
    padding-left: 31px;
}
.leaf::before {
    content: '';
    position: absolute;
    left: 8px;
    top: 0;
    width: 17px;
    height: 10px;
    border-left: 1px solid #d9d9d9;
    border-bottom: 1px solid #d9d9d9;
}
.leaf:not(.last)::after {
    content: '';
    position: absolute;
    left: 8px;
    top: 10px;
    height: 11px;
    border-left: 1px solid #d9d9d9;
}
.lock-cell svg {
    margin-left: 7px;
}
.group-cell div {
    display: flex;
    align-items: center;
    gap: 6px;
    margin-left: -1px;
}
.minus {
    width: 13px;
    height: 13px;
    border: 1px solid #888;
    border-radius: 2px;
    background: linear-gradient(#555, #555) center / 5px 1px no-repeat;
}
.selected td {
    background: #d4e8ff;
}
.drawing-thumb {
    height: 25px;
    margin-top: 91px;
}

.tabs {
    flex: none;
    height: 23px;
    display: flex;
    background: #f0f0f0;
    border-bottom: 1px solid #d6d6d6;
}
.tab {
    width: 65px;
    font-weight: 500;
    color: #888;
    background: #e0e0e0;
    border-right: 1px solid #c4c4c4;
}
.tab.current {
    color: #333;
    background: #f0f0f0;
}
.prop-table {
    width: 362px;
}
.p-num {
    width: 22px;
}
.p-name {
    width: 100px;
}
.p-value {
    width: 200px;
}
.p-extra {
    width: 40px;
}
.num {
    padding: 0;
    text-align: center;
    background: #f0f0f0;
    border-color: #c8c8c8;
}
.num.hot {
    background: #80bbfa;
}
.blue {
    color: #1464ff;
}
.muted {
    color: #999;
}
.check {
    padding: 0;
}
.check input {
    display: block;
    position: relative;
    width: 14px;
    height: 14px;
    margin: 0 auto;
    appearance: none;
    border: 1px solid #808080;
    border-radius: 2px;
    background: #fff;
}
.check input:checked {
    background: #2a7de1;
    border-color: #2a7de1;
}
.check input:checked::after {
    content: '';
    position: absolute;
    left: 4px;
    top: 1px;
    width: 4px;
    height: 8px;
    border: solid #fff;
    border-width: 0 2px 2px 0;
    transform: rotate(42deg);
}
.prop-thumb {
    height: 132px;
    margin-top: 14px;
}

/* 3D view */
.viewport {
    flex: 1;
    min-width: 0;
    display: flex;
    flex-direction: column;
    background: #000;
}
.canvas {
    position: relative;
    flex: 1;
    min-height: 0;
}
.scene {
    width: 100%;
    height: 100%;
}
.green {
    fill: #2bdb2b;
}
.olive {
    fill: #6c6b14;
}
.olive-dark {
    fill: #38350c;
}
.teal {
    fill: #1e5f38;
}
.mid {
    fill: #177017;
}
.purple {
    fill: #8800ff;
}
.purple-dark {
    fill: #4c0099;
}
.orange {
    fill: #ffa033;
}
.brown {
    fill: #7a4216;
}
.beam {
    fill: #8b6a16;
}
.blue {
    fill: #3838ff;
}
.navy {
    fill: #1c1c96;
}
.cyan {
    fill: #3ae0f0;
}
.steel {
    fill: #1f7878;
}
.black {
    fill: #000;
}
.white,
.yellow,
.magenta,
.pink,
.orange-line,
.axis-red,
.axis-dark,
.axis-green {
    fill: none;
    stroke: #fff;
    stroke-width: 4;
}
.yellow {
    stroke: #ffff33;
}
.magenta {
    stroke: #ff33ff;
}
.pink {
    stroke: #b06060;
    stroke-width: 3;
}
.orange-line {
    stroke: #f08a28;
}
.thin {
    stroke-width: 2;
}
.axis-red {
    stroke: #f00;
}
.axis-dark {
    stroke: #900;
}
.axis-green {
    stroke: #008000;
}
.bubble,
.front-green,
.front-red,
.cursor {
    fill: none;
    stroke: #008c00;
    stroke-width: 1.3;
}
.front-red {
    stroke: #f00;
}
.cursor {
    stroke: #fff;
    stroke-width: 1;
}
.label {
    font-family: 'Noto Sans CJK SC', sans-serif;
    font-size: 18px;
    text-anchor: middle;
    fill: #fff;
}
.label.z {
    font-size: 16px;
    fill: #00f;
}
.label.x {
    font-size: 16px;
    fill: #f00;
}
.red-arrow {
    fill: #ff2414;
}
.view-tools {
    position: absolute;
    top: 0;
    right: 2px;
    width: 33px;
    padding: 12px 0;
    display: flex;
    flex-direction: column;
    align-items: center;
    gap: 8px;
    background: #fff;
    border: 1px solid #d6d6d6;
    border-radius: 3px;
}
.view-btn text {
    font-size: 8px;
    font-weight: 700;
    fill: #1b76e5;
}
.view-caret {
    margin: -1px 0;
    border-top: 4px solid #4f5668;
}
.view-tools hr {
    width: 23px;
    height: 1px;
    margin: -2px 0;
    border: 0;
    background: #4f5668;
}
.splitter {
    position: absolute;
    top: 368px;
    width: 4px;
    height: 100px;
    background: #5f6b7a;
}
.splitter.left {
    left: -4px;
}
.splitter.right {
    right: 0;
    width: 2px;
}
.hint {
    flex: none;
    height: 27px;
    display: flex;
    align-items: center;
    justify-content: center;
    gap: 3px;
    font-weight: 500;
    color: #fff;
    background: #282828;
}

/* status bar */
.status {
    flex: none;
    height: 33px;
    padding-left: 2px;
    display: flex;
    align-items: center;
    background: #fcfcfc;
    border-bottom: 2px solid #222;
}
.s1 {
    width: 90px;
}
.s2 {
    width: 140px;
}
.s3 {
    width: 110px;
}
.s4 {
    width: 110px;
}
.status-tools {
    display: flex;
    gap: 3px;
}
.status-tools button {
    width: 25px;
    height: 25px;
    display: flex;
    align-items: center;
    justify-content: center;
    gap: 4px;
    border: 1px solid #8a8a8a;
    border-radius: 3px;
    background: #fff;
}
.status-tools .wide {
    width: 36px;
}
.status-tools .dim {
    margin: 0 3px;
    border-color: #b5b5b5;
}
.status-tools .on {
    border-color: #2a7de1;
    background: #d6e5fb;
}
</style>
